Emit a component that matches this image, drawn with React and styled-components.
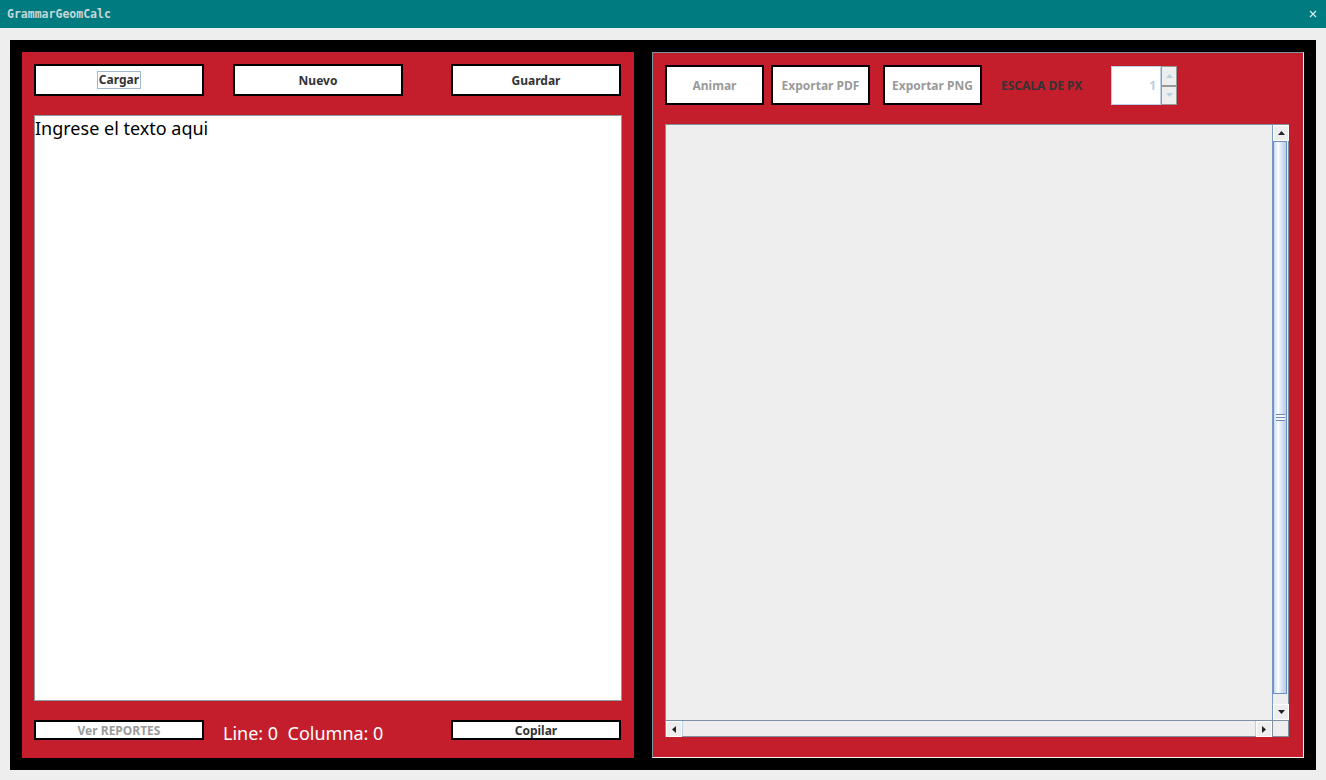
import React from "react";
import styled, { createGlobalStyle } from "styled-components";

const GlobalStyle = createGlobalStyle`
  html, body {
    margin: 0;
    padding: 0;
    background: #eeeeee;
    overflow: hidden;
  }
  * {
    box-sizing: border-box;
  }
`;

const Arrow = ({ dir, color = "#222" }) => {
  const pts = {
    up: "0,4 7,4 3.5,0",
    down: "0,0 7,0 3.5,4",
    left: "4,0 4,7 0,3.5",
    right: "0,0 0,7 4,3.5",
  }[dir];
  const vertical = dir === "up" || dir === "down";
  return (
    <svg width={vertical ? 7 : 4} height={vertical ? 4 : 7} viewBox={vertical ? "0 0 7 4" : "0 0 4 7"}>
      <polygon points={pts} fill={color} />
    </svg>
  );
};

const App = () => {
  return (
    <Window>
      <GlobalStyle />
      <TitleBar>
        <Title>GrammarGeomCalc</Title>
        <CloseBtn>
          <svg width="8" height="8" viewBox="0 0 8 8">
            <path d="M1 1L7 7M7 1L1 7" stroke="#d8eeee" strokeWidth="1.2" />
          </svg>
        </CloseBtn>
      </TitleBar>

      <Content>
        <Frame>
          <LeftPanel>
            <Row>
              <ToolButton $w={170} $h={32}>
                <Focus>Cargar</Focus>
              </ToolButton>
              <ToolButton $w={170} $h={32} $ml={29}>
                Nuevo
              </ToolButton>
              <ToolButton $w={170} $h={32} $ml={48}>
                Guardar
              </ToolButton>
            </Row>
            <Editor>Ingrese el texto aqui</Editor>
            <BottomRow>
              <ToolButton $w={170} $h={20} $disabled>
                Ver REPORTES
              </ToolButton>
              <Position>Line: 0&nbsp;&nbsp;Columna: 0</Position>
              <ToolButton $w={170} $h={20} $ml={67}>
                Copilar
              </ToolButton>
            </BottomRow>
          </LeftPanel>

          <RightPanel>
            <Row>
              <ToolButton $w={99} $h={40} $disabled>
                Animar
              </ToolButton>
              <ToolButton $w={99} $h={40} $ml={7} $disabled>
                Exportar PDF
              </ToolButton>
              <ToolButton $w={99} $h={40} $ml={13} $disabled>
                Exportar PNG
              </ToolButton>
              <ScaleLabel>ESCALA DE PX</ScaleLabel>
              <Spinner>
                <SpinField>1</SpinField>
                <SpinButtons>
                  <SpinBtn>
                    <Arrow dir="up" color="#b9d0e6" />
                  </SpinBtn>
                  <SpinBtn>
                    <Arrow dir="down" color="#b9d0e6" />
                  </SpinBtn>
                </SpinButtons>
              </Spinner>
            </Row>

            <ScrollPane>
              <Viewport />
              <VBar>
                <ArrowBtn>
                  <Arrow dir="up" />
                </ArrowBtn>
                <VTrack>
                  <VThumb>
                    <Grip />
                  </VThumb>
                </VTrack>
                <ArrowBtn>
                  <Arrow dir="down" />
                </ArrowBtn>
              </VBar>
              <HBar>
                <ArrowBtn>
                  <Arrow dir="left" />
                </ArrowBtn>
                <HTrack />
                <ArrowBtn>
                  <Arrow dir="right" />
                </ArrowBtn>
              </HBar>
              <Corner />
            </ScrollPane>
          </RightPanel>
        </Frame>
      </Content>
    </Window>
  );
};

const Window = styled.div`
  width: 1326px;
  height: 780px;
  display: flex;
  flex-direction: column;
  background: #eeeeee;
`;

const TitleBar = styled.div`
  height: 28px;
  background: #007b7f;
  display: flex;
  align-items: center;
  justify-content: space-between;
  padding: 0 9px 1px 7px;
`;

const Title = styled.div`
  font-family: "DejaVu Sans Mono", "Liberation Mono", monospace;
  font-size: 11.5px;
  font-weight: bold;
  color: #c6d8d8;
`;

const CloseBtn = styled.div`
  display: flex;
  align-items: center;
`;

const Content = styled.div`
  padding: 12px 10px 10px 10px;
`;

const Frame = styled.div`
  height: 730px;
  background: #000;
  padding: 12px;
  display: flex;
  gap: 18px;
`;

const LeftPanel = styled.div`
  width: 612px;
  background: #c41e2d;
  padding: 12px 12px 0 12px;
  display: flex;
  flex-direction: column;
`;

const RightPanel = styled.div`
  width: 652px;
  background: #c41e2d;
  border: 1px solid #7f909f;
  border-right-color: #f4f4f4;
  border-bottom-color: #f4f4f4;
  padding: 12px 0 0 12px;
  display: flex;
  flex-direction: column;
`;

const Row = styled.div`
  display: flex;
  align-items: flex-start;
`;

const ToolButton = styled.div`
  width: ${(p) => p.$w}px;
  height: ${(p) => p.$h}px;
  margin-left: ${(p) => p.$ml || 0}px;
  flex-shrink: 0;
  border: 2px solid #000;
  background: #fff;
  display: flex;
  align-items: center;
  justify-content: center;
  font-family: "Noto Sans", "DejaVu Sans", sans-serif;
  font-weight: bold;
  font-size: 12px;
  color: ${(p) => (p.$disabled ? "#9a9a9a" : "#333")};
`;

const Focus = styled.span`
  border: 1px solid #a3b8cc;
  padding: 0 1px;
  line-height: 16px;
`;

const Editor = styled.div`
  margin-top: 19px;
  height: 586px;
  width: 588px;
  background: #fff;
  border: 1px solid #8d99a6;
  padding: 0;
  font-family: "Noto Sans", "DejaVu Sans", sans-serif;
  font-size: 18px;
  line-height: 24px;
  color: #000;
`;

const BottomRow = styled.div`
  margin-top: 19px;
  display: flex;
  align-items: flex-start;
`;

const Position = styled.div`
  margin-left: 19px;
  margin-top: 3px;
  width: 161px;
  font-family: "Noto Sans", "DejaVu Sans", sans-serif;
  font-size: 18px;
  line-height: 20px;
  color: #fff;
  white-space: nowrap;
`;

const ScaleLabel = styled.div`
  margin-left: 19px;
  width: 110px;
  height: 40px;
  display: flex;
  align-items: center;
  font-family: "Noto Sans", "DejaVu Sans", sans-serif;
  font-weight: bold;
  font-size: 12px;
  color: #333;
`;

const Spinner = styled.div`
  margin-top: 1px;
  height: 39px;
  width: 66px;
  display: flex;
`;

const SpinField = styled.div`
  flex: 1;
  background: #fff;
  border: 1px solid #b9d0e6;
  display: flex;
  align-items: center;
  justify-content: flex-end;
  padding-right: 4px;
  font-family: "Noto Sans", "DejaVu Sans", sans-serif;
  font-weight: bold;
  font-size: 12px;
  color: #b9d0e6;
`;

const SpinButtons = styled.div`
  width: 16px;
  display: flex;
  flex-direction: column;
  border: 1px solid #999;
`;

const SpinBtn = styled.div`
  flex: 1;
  background: #eeeeee;
  display: flex;
  align-items: center;
  justify-content: center;
  & + & {
    border-top: 2px solid #999;
  }
`;

const ScrollPane = styled.div`
  margin-top: 19px;
  width: 624px;
  height: 613px;
  border: 1px solid #7f909f;
  display: grid;
  grid-template-columns: 1fr 16px;
  grid-template-rows: 1fr 16px;
  background: #eeeeee;
`;

const Viewport = styled.div`
  background: #eeeeee;
`;

const VBar = styled.div`
  display: flex;
  flex-direction: column;
  border-left: 1px solid #7a9acb;
`;

const ArrowBtn = styled.div`
  width: 16px;
  height: 16px;
  flex-shrink: 0;
  background: #eeeeee;
  border: 1px solid #fff;
  display: flex;
  align-items: center;
  justify-content: center;
`;

const VTrack = styled.div`
  flex: 1;
  padding-bottom: 10px;
  display: flex;
  flex-direction: column;
`;

const VThumb = styled.div`
  flex: 1;
  margin: 0 1px 0 0;
  border: 1px solid #6d8fc7;
  background: linear-gradient(90deg, #c9dbef 0%, #ffffff 35%, #dbe7f4 60%, #b6cce4 100%);
  display: flex;
  align-items: center;
  justify-content: center;
`;

const Grip = styled.div`
  width: 9px;
  height: 7px;
  background: repeating-linear-gradient(180deg, #6d86c0 0 1px, #f4f8fc 1px 3px);
`;

const HBar = styled.div`
  display: flex;
  border-top: 1px solid #7a8ea8;
`;

const HTrack = styled.div`
  flex: 1;
  border-left: 1px solid #b9d0e6;
  border-right: 1px solid #b9d0e6;
  background: #eeeeee;
`;

const Corner = styled.div`
  background: #eeeeee;
  border-left: 1px solid #7f909f;
  border-top: 1px solid #7f909f;
`;

export default App;
